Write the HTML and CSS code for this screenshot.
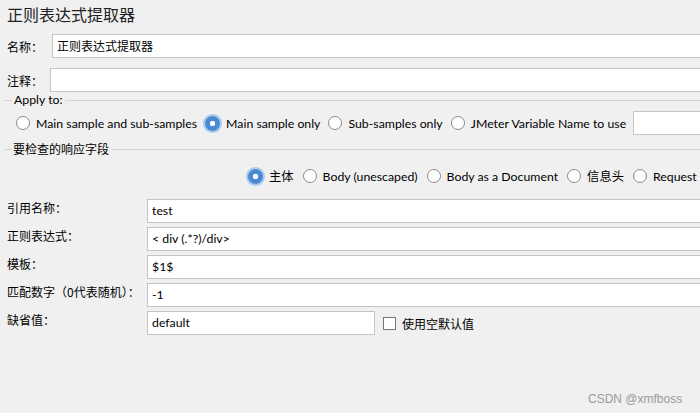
FILE: index.html
```html
<!DOCTYPE html>
<html>
<head>
<meta charset="utf-8">
<link rel="stylesheet" href="styles.css">
</head>
<body>
<div class="page">
  <div class="title">正则表达式提取器</div>
  <div class="row name-row">
    <span class="lbl">名称：</span>
    <div class="field">正则表达式提取器</div>
  </div>
  <div class="row comment-row">
    <span class="lbl">注释：</span>
    <div class="field"></div>
  </div>
  <div class="legend legend-apply"><span>Apply to:</span></div>
  <div class="radios radios-apply">
    <span class="radio"></span><span class="rl">Main sample and sub-samples</span>
    <span class="radio on"></span><span class="rl">Main sample only</span>
    <span class="radio"></span><span class="rl">Sub-samples only</span>
    <span class="radio"></span><span class="rl">JMeter Variable Name to use</span>
    <div class="field var-field"></div>
  </div>
  <div class="legend legend-check"><span>要检查的响应字段</span></div>
  <div class="radios radios-check">
    <span class="radio on"></span><span class="rl">主体</span>
    <span class="radio"></span><span class="rl">Body (unescaped)</span>
    <span class="radio"></span><span class="rl">Body as a Document</span>
    <span class="radio"></span><span class="rl">信息头</span>
    <span class="radio"></span><span class="rl">Request Headers</span>
  </div>
  <div class="grid">
    <span class="glbl">引用名称：</span><div class="field">test</div>
    <span class="glbl">正则表达式：</span><div class="field">&lt; div (.*?)/div&gt;</div>
    <span class="glbl">模板：</span><div class="field">$1$</div>
    <span class="glbl">匹配数字（0代表随机）：</span><div class="field">-1</div>
    <span class="glbl">缺省值：</span>
    <div class="default-row">
      <div class="field short">default</div>
      <span class="check"></span><span class="rl">使用空默认值</span>
    </div>
  </div>
  <div class="watermark">CSDN @xmfboss</div>
</div>
</body>
</html>
```
FILE: styles.css
```css
html, body {
  margin: 0;
  padding: 0;
  background: #f0f0f0;
  overflow: hidden;
  height: 413px;
}
.page {
  width: 740px;
  height: 413px;
  font-family: "Lato", "Noto Sans CJK SC", sans-serif;
  font-size: 12.3px;
  color: #000;
  display: flex;
  flex-direction: column;
}
.title {
  height: 30px;
  line-height: 30px;
  padding-left: 7px;
  font-size: 16px;
  font-family: "Noto Sans CJK SC", sans-serif;
  color: #222;
  margin-top: -1px;
}
.row {
  display: flex;
  align-items: center;
  padding-left: 7px;
  height: 24px;
}
.name-row { margin-top: 5px; }
.comment-row { margin-top: 10px; }
.lbl {
  font-family: "Noto Sans CJK SC", sans-serif;
  font-size: 12px;
}
.name-row .lbl { width: 45px; }
.comment-row .lbl { width: 43px; }
.field {
  flex: 1;
  height: 22px;
  background: #fff;
  border: 1px solid #c4c4c4;
  box-sizing: content-box;
  line-height: 22px;
  padding-left: 4px;
  font-family: "Lato", "Noto Sans CJK SC", sans-serif;
  font-size: 12.3px;
  white-space: nowrap;
  overflow: hidden;
}
.name-row .field { font-family: "Noto Sans CJK SC", sans-serif; font-size: 12px; }
.legend {
  display: flex;
  align-items: center;
  height: 14px;
  padding-left: 5px;
}
.legend::before {
  content: "";
  width: 7px;
  border-top: 1px solid #d2d2d2;
}
.legend::after {
  content: "";
  flex: 1;
  border-top: 1px solid #d2d2d2;
}
.legend span {
  padding: 0 2px 0 2px;
  font-size: 12.3px;
  line-height: 14px;
}
.legend-apply { margin-top: 1px; }
.legend-check { margin-top: 7px; }
.legend-check span {
  font-family: "Noto Sans CJK SC", sans-serif;
  font-size: 12px;
  padding: 0 3px 0 1px;
}
.radios {
  display: flex;
  align-items: center;
  height: 24px;
}
.radios-apply { margin-top: 4px; padding-left: 16px; }
.radios-check { margin-top: 8px; padding-left: 248px; height: 24px; }
.radios-check .rl { margin-right: 9px; }
.radio {
  width: 14px;
  height: 14px;
  border-radius: 50%;
  border: 1px solid #8a8a8a;
  background: #fff;
  box-sizing: border-box;
  flex: none;
}
.radio.on {
  width: 15px;
  height: 15px;
  border: 1px solid #3f7fc8;
  background: radial-gradient(circle, #fff 0 2.5px, #4a8ad4 3px);
  box-shadow: 0 0 0 2px #a7c9ee;
}
.rl {
  margin-left: 6px;
  margin-right: 8px;
  white-space: nowrap;
  font-family: "Lato", "Noto Sans CJK SC", sans-serif;
}
.var-field { flex: 1; height: 22px; margin-left: -1px; }
.grid {
  display: grid;
  grid-template-columns: 140px 1fr;
  grid-auto-rows: 24px;
  row-gap: 4px;
  padding-left: 7px;
  margin-top: 11px;
}
.grid .field { height: 22px; }
.glbl {
  font-family: "Noto Sans CJK SC", sans-serif;
  font-size: 12px;
  line-height: 18px;
}
.default-row {
  display: flex;
  align-items: center;
}
.field.short {
  flex: none;
  width: 222px;
}
.check {
  width: 13px;
  height: 13px;
  border: 1px solid #777;
  background: #fff;
  box-sizing: border-box;
  margin-left: 8px;
  flex: none;
}
.default-row .rl { font-family: "Noto Sans CJK SC", sans-serif; font-size: 12px; }
.watermark {
  margin-top: auto;
  margin-bottom: 7px;
  padding-left: 588px;
  font-family: "Liberation Sans", sans-serif;
  font-size: 12px;
  color: #9a9a9a;
}
```
